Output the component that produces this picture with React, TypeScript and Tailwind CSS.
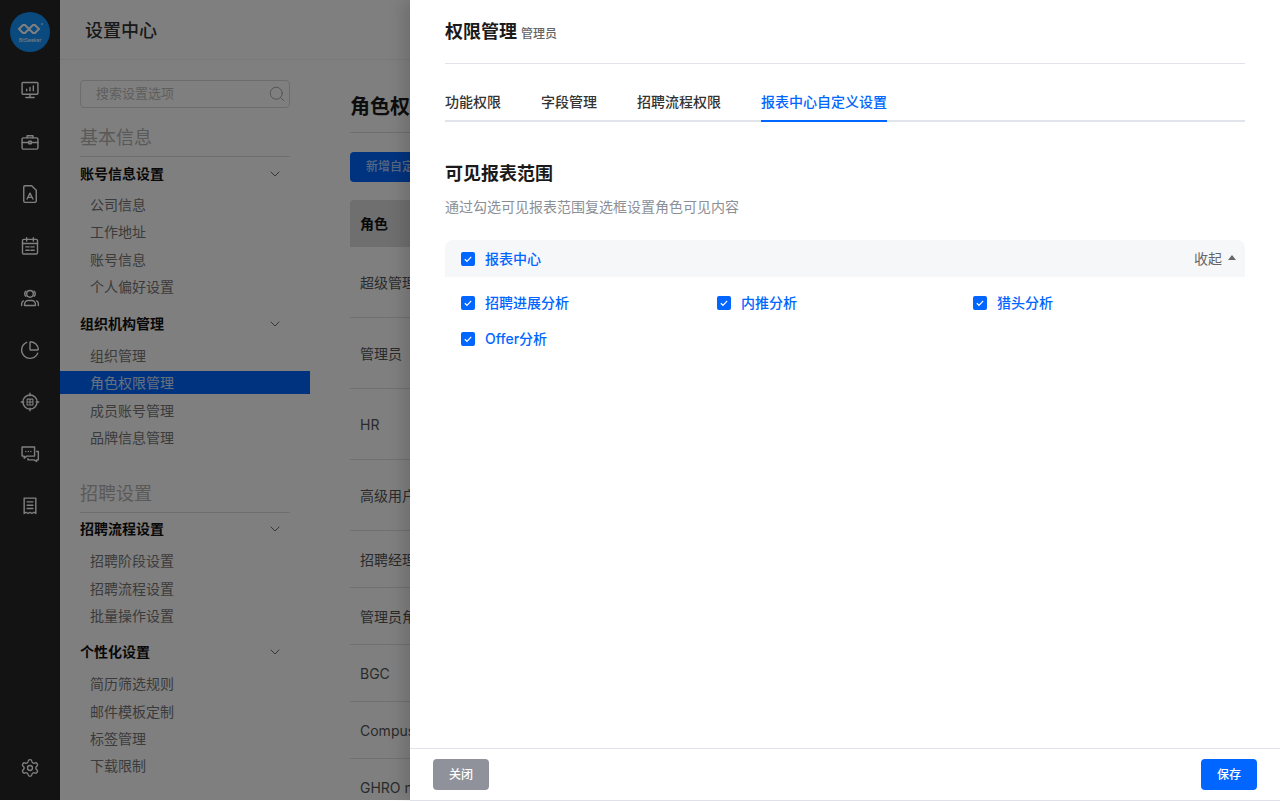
import { ChevronDown, Search, ChartPie, Settings } from 'lucide-react'

const FONT = "font-['Inter','Noto_Sans_CJK_SC',sans-serif]"

const sections = [
  {
    title: '基本信息',
    cls: 'mt-[17px]',
    groups: [
      { name: '账号信息设置', cls: 'mt-[4px]', headCls: 'mb-[4px]', items: ['公司信息', '工作地址', '账号信息', '个人偏好设置'] },
      { name: '组织机构管理', cls: 'mt-[11px]', headCls: 'mb-[5px]', items: ['组织管理', '角色权限管理', '成员账号管理', '品牌信息管理'] },
    ],
  },
  {
    title: '招聘设置',
    cls: 'mt-[30px]',
    groups: [
      { name: '招聘流程设置', cls: 'mt-[3px]', headCls: 'mb-[5px]', items: ['招聘阶段设置', '招聘流程设置', '批量操作设置'] },
      { name: '个性化设置', cls: 'mt-[10px]', headCls: 'mb-[5px]', items: ['简历筛选规则', '邮件模板定制', '标签管理', '下载限制'] },
    ],
  },
]

const rows = [
  { name: '超级管理员', cls: 'h-[71px]' },
  { name: '管理员', cls: 'h-[71px]' },
  { name: 'HR', cls: 'h-[71px]' },
  { name: '高级用户', cls: 'h-[71px]' },
  { name: '招聘经理', cls: 'h-[56px]' },
  { name: '管理员角色', cls: 'h-[57px]' },
  { name: 'BGC', cls: 'h-[57px]' },
  { name: 'Compus', cls: 'h-[57px]' },
  { name: 'GHRO manager', cls: 'h-[57px]' },
]

function RailIcon({ children }: { children: React.ReactNode }) {
  return (
    <svg width="20" height="20" viewBox="0 0 24 24" fill="none" stroke="currentColor" strokeWidth="1.7" strokeLinecap="round" strokeLinejoin="round">
      {children}
    </svg>
  )
}

function Logo() {
  return (
    <div className="w-10 h-10 rounded-full bg-[#1694ff] flex flex-col items-center justify-center">
      <svg width="26" height="12" viewBox="0 0 26 12" fill="none" stroke="#ffffff" strokeWidth="2" className="mt-0.5">
        <path d="M2 6 L6 2 H8 L12 6 L8 10 H6 Z M12 6 L16 2 H18 L22 6 L18 10 H16 Z" />
        <circle cx="25" cy="1" r="0.6" fill="#ffffff" strokeWidth="0.5" />
      </svg>
      <span className="text-[5px] leading-[6px] mt-[2px] text-white">BitSeeker</span>
    </div>
  )
}

function Rail() {
  return (
    <aside className="w-[60px] h-full shrink-0 bg-[#262626] text-[#fff] flex flex-col items-center pt-3 pb-[22px]">
      <Logo />
      <div className="mt-[28px] flex flex-col items-center gap-[32px]">
        <RailIcon>
          <rect x="2.5" y="3" width="19" height="14" rx="1" />
          <path d="M12 17v4M7 21h10M8 13v-2M12 13V9M16 13V7" />
        </RailIcon>
        <RailIcon>
          <rect x="2.5" y="7" width="19" height="13.500" rx="1.500" />
          <path d="M8.500 7V4.500h7V7M2.500 12.500h8M13.500 12.500h8" />
          <rect x="10.500" y="11" width="3" height="3" />
        </RailIcon>
        <RailIcon>
          <path d="M14 2H6a1.5 1.5 0 0 0-1.5 1.5v17A1.5 1.5 0 0 0 6 22h12a1.5 1.5 0 0 0 1.5-1.5V7.5Z" />
          <path d="M8.5 18l3.5-7 3.5 7M9.5 16h5" />
        </RailIcon>
        <RailIcon>
          <rect x="3" y="4" width="18" height="17.5" rx="1.5" />
          <path d="M3 9h18M8 2v4M16 2v4M7 13h4M13 13h4M7 17h4M13 17h4" />
        </RailIcon>
        <RailIcon>
          <path d="M12 3a4 4 0 1 0 0 8 4 4 0 0 0 0-8Z" />
          <path d="M17 4a4 4 0 0 1 0 6M7 4a4 4 0 0 0 0 6" />
          <path d="M5.5 21v-1.5A4.5 4.5 0 0 1 10 15h4a4.5 4.5 0 0 1 4.5 4.500V21Z" />
          <path d="M2 21v-2a4 4 0 0 1 2-3.500M22 21v-2a4 4 0 0 0-2-3.500" />
        </RailIcon>
        <ChartPie size={20} strokeWidth={1.7} />
        <RailIcon>
          <circle cx="12" cy="12" r="8.500" />
          <path d="M12 1.500v3M12 19.500v3M1.500 12h3M19.500 12h3" />
          <path d="M8.500 8.500h7v7h-7ZM12 8.500v7M8.500 12h7" strokeWidth="1.300" />
        </RailIcon>
        <RailIcon>
          <path d="M2.500 3.500h15v11H8l-3 2.500v-2.500H2.500Z" />
          <path d="M20 9h2v10h-2v2l-3-2H9.500v-1.500" />
          <path d="M7 9h.01M10 9h.01M13 9h.01" />
        </RailIcon>
        <RailIcon>
          <path d="M5 2.500h14V21l-2.300-1.500L14.300 21 12 19.500 9.700 21l-2.400-1.500L5 21Z" />
          <path d="M8.500 7h7M8.500 11h7M8.500 15h7" />
        </RailIcon>
      </div>
      <div className="mt-auto">
        <Settings size={20} strokeWidth={1.6} />
      </div>
    </aside>
  )
}

function Sidebar() {
  return (
    <nav className="w-[250px] h-full shrink-0 bg-white pt-5 overflow-hidden">
      <div className="mx-5 h-7 border border-[#d9d9d9] rounded flex items-center justify-between pl-[15px] pr-[3px]">
        <span className="text-[13px] text-[#bdbdbd]">搜索设置选项</span>
        <Search size={18} strokeWidth={1.3} className="text-[#a8a8a8]" />
      </div>
      {sections.map((s) => (
        <div key={s.title} className={s.cls}>
          <div className="mx-5 h-[32px] border-b border-[#dcdcdc] text-[18px] leading-[26px] text-[#b3b3b3]">{s.title}</div>
          {s.groups.map((g) => (
            <div key={g.name} className={g.cls}>
              <div className={`mx-5 h-[26px] ${g.headCls} flex items-center justify-between font-semibold text-sm text-[#111]`}>
                <span>{g.name}</span>
                <ChevronDown size={16} strokeWidth={1.3} className="mr-[7px] text-[#555]" />
              </div>
              {g.items.map((item) =>
                item === '角色权限管理' ? (
                  <div key={item} className="h-[27.3px] py-[2px]">
                    <div className="h-[23px] bg-[#0066ff] pl-[30px] text-sm leading-[23px] text-white/80">{item}</div>
                  </div>
                ) : (
                  <div key={item} className="h-[27.3px] pl-[30px] text-sm leading-[27px] text-[#777]">
                    {item}
                  </div>
                ),
              )}
            </div>
          ))}
        </div>
      ))}
    </nav>
  )
}

function MainContent() {
  return (
    <main className="flex-1 min-w-0 h-full bg-white pl-10 pt-[25px] overflow-hidden">
      <h2 className="h-[48px] border-b border-[#dcdcdc] text-[20px] leading-[44px] font-semibold text-[#1a1a1a]">角色权限管理</h2>
      <button className="mt-[19px] h-[30px] w-[140px] text-left pl-4 rounded-sm bg-[#0066ff] text-xs font-medium text-white/70 block">
        新增自定义角色
      </button>
      <div className="mt-[18px] h-[47px] bg-[#dedede] rounded-t pl-[10px] flex items-center text-sm font-semibold text-[#111]">角色</div>
      {rows.map((r, i) => (
        <div key={r.name} className={`${i === 4 ? 'h-[57px]' : r.cls} border-b border-[#dfe1e6] pl-[10px] pt-[2px] flex items-center text-sm text-[#555] whitespace-nowrap`}>
          {r.name}
        </div>
      ))}
    </main>
  )
}

function Check() {
  return (
    <span className="w-[14px] h-[14px] shrink-0 rounded-[2px] bg-[#0066ff] flex items-center justify-center">
      <svg width="10" height="10" viewBox="0 0 10 10" fill="none" stroke="#fff" strokeWidth="1.200">
        <path d="M1.800 5.200 4 7.300 8.200 2.800" />
      </svg>
    </span>
  )
}

function CheckItem({ label }: { label: string }) {
  return (
    <div className="flex items-center gap-[10px] text-sm font-medium text-[#0066ff]">
      <Check />
      <span>{label}</span>
    </div>
  )
}

function Drawer() {
  const tabs = ['功能权限', '字段管理', '招聘流程权限', '报表中心自定义设置']
  return (
    <section className="absolute top-0 right-0 w-[870px] h-[801px] bg-white flex flex-col shadow-[-6px_0_16px_rgba(0,0,0,0.15)] border-b border-[#e0e1e8]">
      <div className="flex-1 px-[35px]">
        <div className="h-[64px] border-b border-[#e2e4ec] pt-5 flex items-baseline gap-1">
          <span className="text-[18px] leading-6 font-semibold text-[#1a1a1a]">权限管理</span>
          <span className="text-xs font-medium text-[#666]">管理员</span>
        </div>
        <div className="mt-[24px] h-[34px] flex gap-10 border-b-2 border-[#e2e4ec]">
          {tabs.map((t, i) => (
            <div
              key={t}
              className={
                i === 3
                  ? 'h-[34px] border-b-2 border-[#0066ff] text-sm leading-[28px] font-medium text-[#0066ff]'
                  : 'text-sm leading-[28px] font-medium text-[#333]'
              }
            >
              {t}
            </div>
          ))}
        </div>
        <h3 className="mt-[39px] text-[18px] leading-[26px] font-semibold text-[#1a1a1a]">可见报表范围</h3>
        <p className="mt-[9px] text-sm leading-[22px] text-[#8c8f96]">通过勾选可见报表范围复选框设置角色可见内容</p>
        <div className="mt-[22px] h-[37px] rounded-t-lg bg-[#f6f7f9] pl-4 pr-[9px] flex items-center justify-between">
          <CheckItem label="报表中心" />
          <div className="flex items-center gap-[6px] text-sm text-[#666]">
            <span>收起</span>
            <span className="w-0 h-0 border-x-[4.5px] border-x-transparent border-b-[5px] border-b-[#666] mb-[2px]" />
          </div>
        </div>
        <div className="pl-4 pt-[16px] grid grid-cols-[256px_256px_256px] gap-y-[16px]">
          <CheckItem label="招聘进展分析" />
          <CheckItem label="内推分析" />
          <CheckItem label="猎头分析" />
          <CheckItem label="Offer分析" />
        </div>
      </div>
      <div className="h-[52px] border-t border-[#e2e4ec] px-[23px] pt-[10px] flex justify-between">
        <button className="w-14 h-[31px] rounded-sm bg-[#8f929b] text-xs font-medium text-white">关闭</button>
        <button className="w-14 h-[31px] rounded-sm bg-[#0066ff] text-xs font-medium text-white">保存</button>
      </div>
    </section>
  )
}

export default function App() {
  return (
    <div className={`relative h-[801px] overflow-hidden bg-white ${FONT}`}>
      <div className="h-[800px] flex overflow-hidden">
        <Rail />
        <div className="flex-1 min-w-0 flex flex-col">
          <header className="h-[60px] shrink-0 bg-[#fff] border-b border-[#f0f0f0] pl-[25px] pt-[2px] flex items-center text-[18px] font-medium text-[#333]">
            设置中心
          </header>
          <div className="flex-1 min-h-0 flex">
            <Sidebar />
            <MainContent />
          </div>
        </div>
      </div>
      <div className="absolute top-0 inset-x-0 h-[800px] bg-black/50" />
      <Drawer />
    </div>
  )
}
